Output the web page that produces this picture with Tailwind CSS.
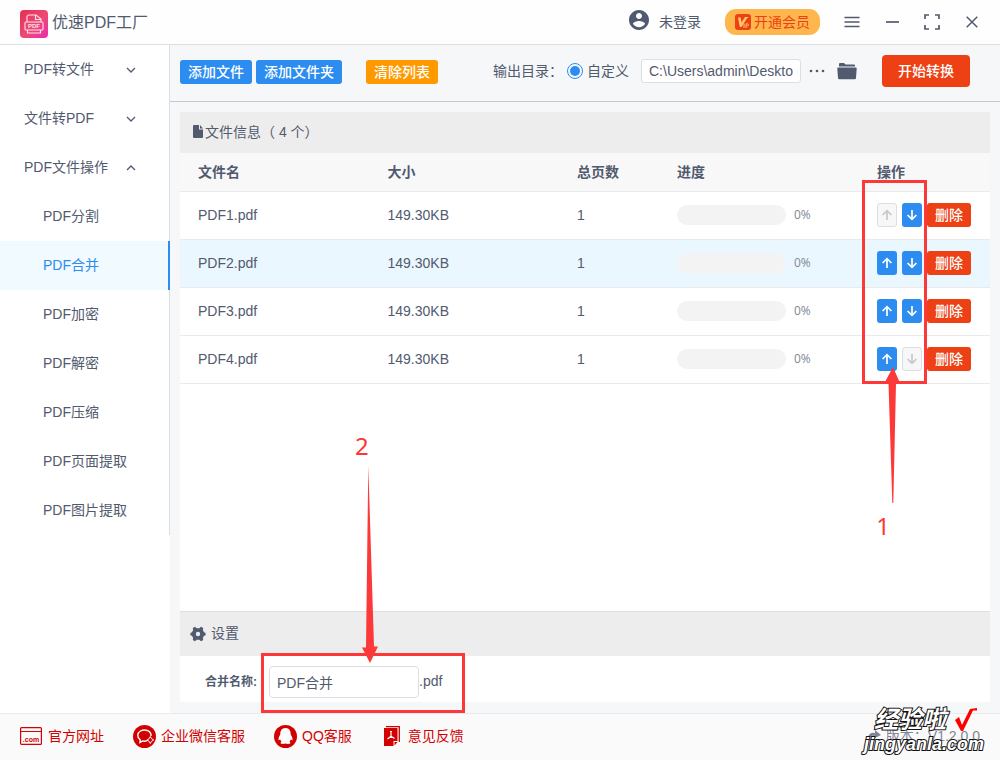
<!DOCTYPE html>
<html lang="zh-CN">
<head>
<meta charset="utf-8">
<meta name="viewport" content="width=device-width, initial-scale=1">
<title>优速PDF工厂</title>
<script src="https://cdn.jsdelivr.net/npm/@tailwindcss/browser@4"></script>
</head>
<body class="relative flex min-h-screen flex-col overflow-x-hidden bg-[#f5f7f9] font-['Liberation_Sans','Noto_Sans_CJK_SC',sans-serif] text-sm leading-5 text-[#515a6e]">

<!-- Shared icon shapes -->
<svg class="hidden">
  <symbol id="chevron" viewBox="0 0 10 6"><path d="M1 1l4 4 4-4" fill="none" stroke="currentColor" stroke-width="1.3"/></symbol>
  <symbol id="arrow-up" viewBox="0 0 12 12"><path d="M6 11V1.8M1.600 6L6 1.600 10.400 6" fill="none" stroke="currentColor" stroke-width="1.700"/></symbol>
  <symbol id="arrow-down" viewBox="0 0 12 12"><path d="M6 1v9.200M1.600 6L6 10.400 10.400 6" fill="none" stroke="currentColor" stroke-width="1.700"/></symbol>
</svg>

<header class="flex h-[45px] shrink-0 items-center border-b border-[#dcdee2] bg-[#fefefe] px-5">
  <svg class="mt-1 size-7" viewBox="0 0 28 28">
    <defs><linearGradient id="brand" x1="0" y1="0" x2="1" y2="1"><stop offset="0" stop-color="#e52e55"/><stop offset=".55" stop-color="#ee4a75"/><stop offset="1" stop-color="#ea2bb0"/></linearGradient></defs>
    <rect width="28" height="28" rx="4" fill="url(#brand)"/>
    <g fill="none" stroke="#fbe3ea" stroke-width="1.100"><path d="M7 11.500V7q0-2 2-2h7l5 4v2.500M15.500 5v4.500H21M6 12h16q1 0 1 1v6q0 1-1 1H6q-1 0-1-1v-6q0-1 1-1zM7.500 20v3h13v-3"/></g>
    <text x="14" y="18" text-anchor="middle" font-family="Liberation Sans" font-weight="bold" font-size="6" fill="#fbe3ea">PDF</text>
  </svg>
  <h1 class="ml-1 pt-0.5 text-base">优速PDF工厂</h1>
  <div class="ml-auto flex items-center">
    <svg class="mb-1 size-6" viewBox="0 0 24 24" fill="currentColor"><path d="M12 2C6.480 2 2 6.480 2 12s4.480 10 10 10 10-4.480 10-10S17.520 2 12 2zm0 3c1.660 0 3 1.340 3 3s-1.340 3-3 3-3-1.340-3-3 1.340-3 3-3zm0 14.200c-2.500 0-4.710-1.280-6-3.220.030-1.990 4-3.080 6-3.080 1.990 0 5.970 1.090 6 3.080-1.290 1.940-3.500 3.220-6 3.220z"/></svg>
    <a href="#login" class="ml-2">未登录</a>
    <button class="ml-6 flex h-[26px] items-center rounded-[11px] bg-[#ffb74d] px-2.5 text-[#ed4014]">
      <svg class="mr-[3px] size-4" viewBox="0 0 16 16"><rect width="16" height="16" rx="3" fill="#ed4014"/><path d="M3 3.500h2.700l.8 5 3.500-5.500H14l-2 1.200L6.500 13H4.800z" fill="#ffc66b"/><path d="M9 9.500V14M11 14V9.800h1.500q1 0 1 1t-1 1H11" stroke="#ffc66b" fill="none"/></svg>开通会员
    </button>
    <div class="-mr-1 ml-5 flex gap-4">
      <button class="grid size-6 place-items-center" aria-label="菜单"><svg class="h-3 w-4" viewBox="0 0 16 12" stroke="currentColor" stroke-width="1.500"><path d="M.5 1.500h15M.5 6h15M.5 10.500h15"/></svg></button>
      <button class="grid size-6 place-items-center" aria-label="最小化"><svg class="h-2 w-[13px]" viewBox="0 0 13 8"><path d="M0 4h13" stroke="currentColor" stroke-width="1.700"/></svg></button>
      <button class="grid size-6 place-items-center" aria-label="最大化"><svg class="size-4" viewBox="0 0 16 16" fill="none" stroke="currentColor" stroke-width="1.700"><path d="M1 5V1h4M11 1h4v4M15 11v4h-4M5 15H1v-4"/></svg></button>
      <button class="grid size-6 place-items-center" aria-label="关闭"><svg class="size-3" viewBox="0 0 12 12" stroke="currentColor" stroke-width="1.500"><path d="M.7.7l10.600 10.600M11.300.7L.7 11.300"/></svg></button>
    </div>
  </div>
</header>

<div class="flex flex-1">
  <aside class="w-[170px] shrink-0 bg-white">
    <nav class="border-r border-[#dcdee2]">
      <button class="flex h-[49px] w-full items-center justify-between pr-[33px] pb-0.5 pl-6">PDF转文件<svg class="mt-0.5 h-1.5 w-2.5"><use href="#chevron"/></svg></button>
      <button class="flex h-[49px] w-full items-center justify-between pr-[33px] pb-0.5 pl-6">文件转PDF<svg class="mt-0.5 h-1.5 w-2.5"><use href="#chevron"/></svg></button>
      <button class="flex h-[49px] w-full items-center justify-between pr-[33px] pb-0.5 pl-6">PDF文件操作<svg class="mt-0.5 h-1.5 w-2.5 rotate-180"><use href="#chevron"/></svg></button>
      <a href="#split" class="flex h-[49px] items-center pb-0.5 pl-[43px]">PDF分割</a>
      <a href="#merge" class="-mr-px flex h-[49px] items-center border-r-2 border-[#2d8cf0] bg-[#f0faff] pb-0.5 pl-[43px] text-[#2d8cf0]">PDF合并</a>
      <a href="#encrypt" class="flex h-[49px] items-center pb-0.5 pl-[43px]">PDF加密</a>
      <a href="#decrypt" class="flex h-[49px] items-center pb-0.5 pl-[43px]">PDF解密</a>
      <a href="#compress" class="flex h-[49px] items-center pb-0.5 pl-[43px]">PDF压缩</a>
      <a href="#pages" class="flex h-[49px] items-center pb-0.5 pl-[43px]">PDF页面提取</a>
      <a href="#images" class="flex h-[49px] items-center pb-0.5 pl-[43px]">PDF图片提取</a>
    </nav>
  </aside>

  <main class="flex min-w-0 flex-1 flex-col">
    <div class="flex h-[57px] items-center border-b border-[#c5c8ce] pr-[30px] pb-1 pl-2.5">
      <button class="mt-0.5 h-6 rounded-[3px] bg-[#2d8cf0] px-2 font-medium text-white">添加文件</button>
      <button class="mt-0.5 ml-1 h-6 rounded-[3px] bg-[#2d8cf0] px-2 font-medium text-white">添加文件夹</button>
      <button class="mt-0.5 ml-6 h-6 rounded-[3px] bg-[#ff9900] px-2 font-medium text-white">清除列表</button>
      <div class="ml-auto flex items-center">
        <span>输出目录：</span>
        <label class="ml-1 flex items-center gap-1"><input type="radio" name="dir" checked class="size-4 appearance-none rounded-full border border-[#2d8cf0] bg-[#2d8cf0] bg-clip-content p-0.5">自定义</label>
        <input type="text" aria-label="输出目录" value="C:\Users\admin\Deskto" class="ml-3 h-6 w-40 rounded-[3px] border border-[#dcdee2] bg-white px-[7px]">
        <button class="ml-2 grid h-6 w-4 place-items-center" aria-label="浏览"><svg class="h-1 w-4" viewBox="0 0 16 4" fill="currentColor"><circle cx="2" cy="2" r="1.300"/><circle cx="8" cy="2" r="1.300"/><circle cx="14" cy="2" r="1.300"/></svg></button>
        <button class="ml-[11px] grid h-6 w-[22px] place-items-center" aria-label="打开文件夹"><svg class="h-[18px] w-5" viewBox="0 0 20 18" fill="currentColor"><path d="M2 4.500V2q0-1 1-1h4l1.500 1.500H17q1 0 1 1v1z"/><path d="M1.200 5.500h17.600q1 0 .9 1L19 16q-.1 1.300-1.300 1.300H2.400Q1.200 17.300 1 16L.3 6.500q-.1-1 .9-1z"/></svg></button>
        <button class="ml-6 h-8 rounded bg-[#ed4014] px-4 font-medium text-white">开始转换</button>
      </div>
    </div>

    <section class="mx-2.5 mt-2.5 flex flex-1 flex-col bg-white">
      <h2 class="flex h-[41px] items-center bg-[#ededed] pb-0.5 pl-[13px]"><svg class="mr-0.5 h-[13px] w-2.5" viewBox="0 0 10 13" fill="currentColor"><path d="M1 0h5v4.500h4V12q0 1-1 1H1q-1 0-1-1V1q0-1 1-1zM7 0l3 3.500H7z"/></svg>文件信息（ 4 个）</h2>
      <table class="w-full table-fixed border-collapse text-left">
        <colgroup><col><col><col class="w-[100px]"><col class="w-[200px]"><col class="w-[131px]"></colgroup>
        <thead>
          <tr class="h-[38px] border-b border-[#e8eaec] bg-[#f8f8f9]"><th class="pl-[18px]">文件名</th><th class="pl-[18px]">大小</th><th class="pl-[18px]">总页数</th><th class="pl-[18px]">进度</th><th class="pl-[18px]">操作</th></tr>
        </thead>
        <tbody>
          <tr class="h-12 border-b border-[#e8eaec]">
            <td class="pl-[18px]">PDF1.pdf</td><td class="pl-[18px]">149.30KB</td><td class="pl-[18px]">1</td>
            <td class="pl-[18px]"><div class="flex items-center gap-2 text-xs text-[#808695]"><div class="h-5 w-[109px] rounded-full bg-[#f3f3f3]"></div><span class="font-['Open_Sans']">0%</span></div></td>
            <td class="pl-[18px]"><div class="flex"><button disabled aria-label="上移" class="mr-[5px] grid h-6 w-5 place-items-center rounded-[3px] border border-[#dcdee2] bg-[#f7f7f7] text-[#c5c8ce]"><svg class="size-3"><use href="#arrow-up"/></svg></button><button aria-label="下移" class="mr-[5px] grid h-6 w-5 place-items-center rounded-[3px] bg-[#2d8cf0] text-white"><svg class="size-3"><use href="#arrow-down"/></svg></button><button class="h-6 w-11 rounded-[3px] bg-[#ed4014] font-medium text-white">删除</button></div></td>
          </tr>
          <tr class="h-12 border-b border-[#e8eaec] bg-[#ebf7ff]">
            <td class="pl-[18px]">PDF2.pdf</td><td class="pl-[18px]">149.30KB</td><td class="pl-[18px]">1</td>
            <td class="pl-[18px]"><div class="flex items-center gap-2 text-xs text-[#808695]"><div class="h-5 w-[109px] rounded-full bg-[#f3f3f3]"></div><span class="font-['Open_Sans']">0%</span></div></td>
            <td class="pl-[18px]"><div class="flex"><button aria-label="上移" class="mr-[5px] grid h-6 w-5 place-items-center rounded-[3px] bg-[#2d8cf0] text-white"><svg class="size-3"><use href="#arrow-up"/></svg></button><button aria-label="下移" class="mr-[5px] grid h-6 w-5 place-items-center rounded-[3px] bg-[#2d8cf0] text-white"><svg class="size-3"><use href="#arrow-down"/></svg></button><button class="h-6 w-11 rounded-[3px] bg-[#ed4014] font-medium text-white">删除</button></div></td>
          </tr>
          <tr class="h-12 border-b border-[#e8eaec]">
            <td class="pl-[18px]">PDF3.pdf</td><td class="pl-[18px]">149.30KB</td><td class="pl-[18px]">1</td>
            <td class="pl-[18px]"><div class="flex items-center gap-2 text-xs text-[#808695]"><div class="h-5 w-[109px] rounded-full bg-[#f3f3f3]"></div><span class="font-['Open_Sans']">0%</span></div></td>
            <td class="pl-[18px]"><div class="flex"><button aria-label="上移" class="mr-[5px] grid h-6 w-5 place-items-center rounded-[3px] bg-[#2d8cf0] text-white"><svg class="size-3"><use href="#arrow-up"/></svg></button><button aria-label="下移" class="mr-[5px] grid h-6 w-5 place-items-center rounded-[3px] bg-[#2d8cf0] text-white"><svg class="size-3"><use href="#arrow-down"/></svg></button><button class="h-6 w-11 rounded-[3px] bg-[#ed4014] font-medium text-white">删除</button></div></td>
          </tr>
          <tr class="h-12 border-b border-[#e8eaec]">
            <td class="pl-[18px]">PDF4.pdf</td><td class="pl-[18px]">149.30KB</td><td class="pl-[18px]">1</td>
            <td class="pl-[18px]"><div class="flex items-center gap-2 text-xs text-[#808695]"><div class="h-5 w-[109px] rounded-full bg-[#f3f3f3]"></div><span class="font-['Open_Sans']">0%</span></div></td>
            <td class="pl-[18px]"><div class="flex"><button aria-label="上移" class="mr-[5px] grid h-6 w-5 place-items-center rounded-[3px] bg-[#2d8cf0] text-white"><svg class="size-3"><use href="#arrow-up"/></svg></button><button disabled aria-label="下移" class="mr-[5px] grid h-6 w-5 place-items-center rounded-[3px] border border-[#dcdee2] bg-[#f7f7f7] text-[#c5c8ce]"><svg class="size-3"><use href="#arrow-down"/></svg></button><button class="h-6 w-11 rounded-[3px] bg-[#ed4014] font-medium text-white">删除</button></div></td>
          </tr>
        </tbody>
      </table>
    </section>

    <section class="mx-2.5 mb-[11px] bg-white">
      <h2 class="flex h-[45px] items-center border-t border-[#dcdee2] bg-[#ededed] pb-0.5 pl-2.5"><svg class="mt-0.5 mr-[5px] size-4" viewBox="0 0 16 16"><path d="M5 .8l1.700 1.400h2.600L11 .8l2.200 1.300-.3 2.200 1.200 2 1.500.6v2.300l-1.500.6-1.200 2 .3 2.200L11 15.200l-1.700-1.400H6.700L5 15.200 2.800 14l.3-2.200-1.200-2L.4 9.200V6.900l1.500-.6 1.200-2-.3-2.200z" fill="currentColor"/><circle cx="8" cy="8" r="2.200" fill="#ededed"/></svg>设置</h2>
      <div class="flex h-[46px] items-center pt-1.5 pl-[25px]">
        <label for="merged" class="w-[64px] text-xs font-bold whitespace-nowrap">合并名称:</label>
        <input id="merged" type="text" value="PDF合并" class="h-8 w-[150px] rounded border border-[#dcdee2] bg-white px-[7px]">
        <span class="pb-0.5">.pdf</span>
      </div>
    </section>
  </main>
</div>

<footer class="flex h-[47px] shrink-0 items-center border-t border-[#e8eaec] bg-[#fafafa] px-5 pb-0.5 text-[#d20000]">
  <a href="#site" class="flex items-center"><svg class="mr-1.5 h-[18px] w-[22px]" viewBox="0 0 22 18"><rect x=".6" y=".6" width="20.800" height="16.800" rx="1" fill="none" stroke="currentColor" stroke-width="1.200"/><path d="M1 4.500h20" stroke="currentColor"/><text x="11" y="14.500" text-anchor="middle" font-family="Liberation Sans" font-size="7" font-weight="bold" fill="currentColor">.com</text></svg>官方网址</a>
  <a href="#wecom" class="ml-[29px] flex items-center"><svg class="mr-[5px] size-[23px]" viewBox="0 0 23 23"><circle cx="11.500" cy="11.500" r="11.500" fill="currentColor"/><path d="M15 15c-1.500 1.200-3.600 1.400-5.500.9L7 17.500l.2-2.700C3.800 12.500 4 8 7.500 6c4.500-2.500 11 0 10.500 5" fill="none" stroke="#fff" stroke-width="1.400"/><path d="M17.300 11.500l1.200 2.200 2.200 1.300-2.200 1.300-1.200 2.200-1.200-2.200-2.200-1.300 2.200-1.300z" fill="none" stroke="#fff"/></svg>企业微信客服</a>
  <a href="#qq" class="ml-[29px] flex items-center"><svg class="mr-[5px] size-[23px]" viewBox="0 0 23 23"><circle cx="11.500" cy="11.500" r="11.500" fill="currentColor"/><path d="M11.500 3c-4 0-5.300 3-5.200 6.500-1 1.700-2 3.500-1.800 5.200.1 1 .9.500 1.600-.4.300 1 .7 1.700 1.400 2.400-1 .4-1.500 1.800.2 2.100 1.600.3 2.800 0 3.800-.4 1 .4 2.200.7 3.800.4 1.700-.3 1.200-1.700.2-2.100.7-.7 1.100-1.400 1.400-2.400.7.900 1.500 1.400 1.600.4.200-1.700-.8-3.500-1.800-5.200C16.800 6 15.500 3 11.500 3z" fill="#fff"/></svg>QQ客服</a>
  <a href="#feedback" class="ml-8 flex items-center"><svg class="mr-2 h-5 w-4" viewBox="0 0 16 20"><path d="M2 .7h13.300V16" fill="none" stroke="currentColor" stroke-width="1.300"/><path d="M0 2h13.500v13H9.500v5H0z" fill="currentColor"/><path d="M10.500 19.500V16h3z" fill="currentColor"/><path d="M7 6.500v3.700L3.500 13M7 10.200l3.500 2.300M6 5.700h2M7 10v2" stroke="#fff" stroke-width="1.200" fill="none"/></svg>意见反馈</a>
  <span class="ml-auto flex items-center gap-1 text-[#808695]"><svg class="size-4" viewBox="0 0 16 16"><path d="M2 10q1-6 7-5V2l6 5-6 3V8Q5 7 2 10z" fill="currentColor"/></svg>版本：V1.2.0.0</span>
</footer>

<!-- Tutorial marks drawn over the window -->
<div class="pointer-events-none absolute top-[180px] right-[73px] h-[204px] w-[65px] border-3 border-[#fc3838]"></div>
<svg class="pointer-events-none absolute top-[367px] right-[100px] h-[136px] w-4" viewBox="0 0 16 136" fill="#fc3838"><path d="M9 0l6.500 15-3.500 1-2.700 120H8.300L4.500 16 1 15z"/></svg>
<div class="pointer-events-none absolute top-[512px] right-[110px] font-['Noto_Sans'] text-2xl leading-7 text-[#fc3838]">1</div>
<div class="pointer-events-none absolute top-[432px] left-[355px] font-['Noto_Sans'] text-2xl leading-7 text-[#fc3838]">2</div>
<svg class="pointer-events-none absolute top-[466px] left-[361px] h-[197px] w-[18px]" viewBox="0 0 18 197" fill="#fc3838"><path d="M7.300 0L13 180.500h4L9 197 1 181.500h4z"/></svg>
<div class="pointer-events-none absolute top-[653px] left-[261px] h-[60px] w-[204px] border-3 border-[#fc3838]"></div>

<!-- Watermark -->
<div class="pointer-events-none absolute right-4 bottom-1.5 font-bold text-white italic [paint-order:stroke_fill] [-webkit-text-stroke:2px_#111]">
  <div class="flex items-start justify-end pr-1.5 text-2xl leading-7">经验啦<svg class="mt-0.5 ml-2 size-6" viewBox="0 0 24 24"><path d="M1 12l4-3 3 8L16 1l7-1v2.500h-4L9 23H7z" fill="#f00"/></svg></div>
  <div class="text-lg leading-5">jingyanla.com</div>
</div>
</body>
</html>
